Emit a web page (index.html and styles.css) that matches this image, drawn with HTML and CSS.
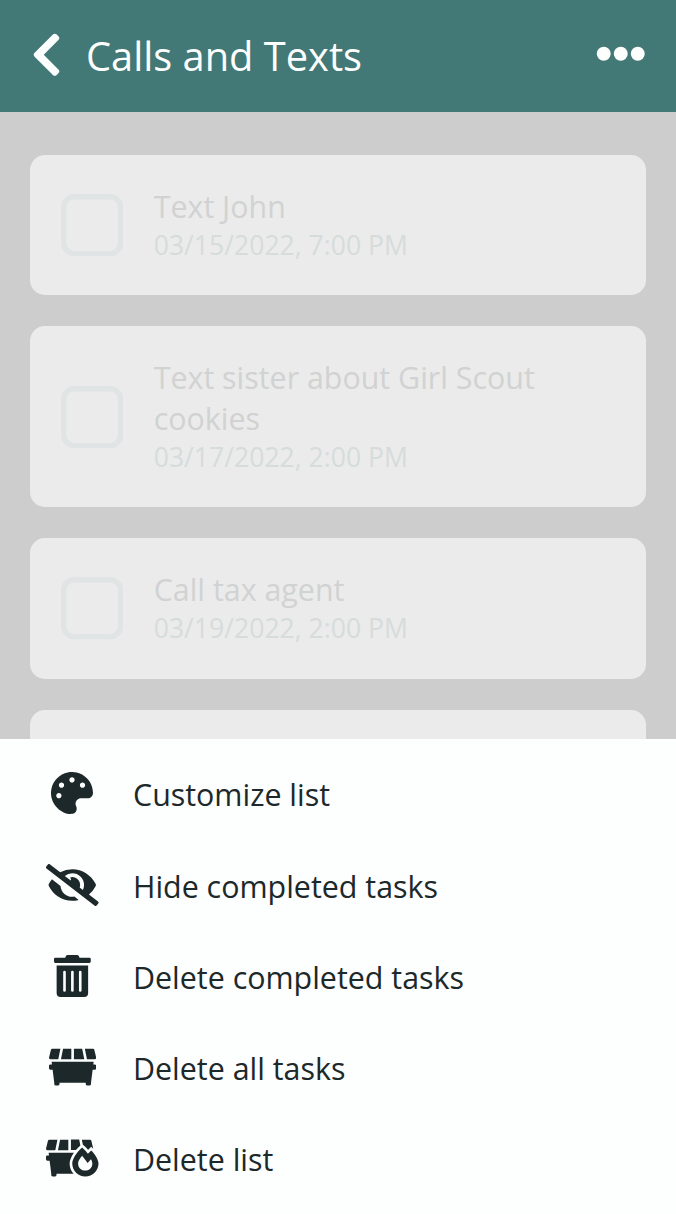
FILE: index.html
```html
<!DOCTYPE html>
<html lang="en">
<head>
<meta charset="utf-8">
<title>Calls and Texts</title>
<link rel="stylesheet" href="styles.css">
</head>
<body>
<div class="app">
  <header class="bar">
    <svg class="back" viewBox="0 0 320 512"><path d="M34.52 239.03L228.87 44.69c9.37-9.37 24.57-9.37 33.94 0l22.67 22.67c9.36 9.36 9.37 24.52.04 33.9L131.49 256l154.02 154.75c9.34 9.38 9.32 24.54-.04 33.9l-22.67 22.67c-9.37 9.37-24.57 9.37-33.94 0L34.52 272.97c-9.37-9.37-9.37-24.57 0-33.94z"/></svg>
    <h1 class="title">Calls and Texts</h1>
    <svg class="more" viewBox="0 0 512 512"><circle cx="80" cy="256" r="72"/><circle cx="256" cy="256" r="72"/><circle cx="432" cy="256" r="72"/></svg>
  </header>
  <main class="tasks">
    <article class="task"><svg class="check" viewBox="0 0 62.3 62.3"><rect x="2.7" y="2.7" width="56.9" height="56.9" rx="10.5"/></svg><div class="info"><div class="name">Text John</div><div class="date">03/15/2022, 7:00 PM</div></div></article>
    <article class="task"><svg class="check" viewBox="0 0 62.3 62.3"><rect x="2.7" y="2.7" width="56.9" height="56.9" rx="10.5"/></svg><div class="info"><div class="name">Text sister about Girl Scout cookies</div><div class="date">03/17/2022, 2:00 PM</div></div></article>
    <article class="task"><svg class="check" viewBox="0 0 62.3 62.3"><rect x="2.7" y="2.7" width="56.9" height="56.9" rx="10.5"/></svg><div class="info"><div class="name">Call tax agent</div><div class="date">03/19/2022, 2:00 PM</div></div></article>
    <article class="task"></article>
  </main>
  <nav class="menu">
    <div class="item"><span class="slot"><svg class="icon" viewBox="0 0 512 512"><path d="M204.3 5C104.9 24.4 24.8 104.3 5.2 203.4c-37 187 131.7 326.4 258.8 306.7 41.2-6.4 61.4-54.6 42.5-91.7-23.1-45.4 9.9-98.4 60.9-98.4h79.7c35.8 0 64.8-29.6 64.9-65.3C511.5 97.1 368.1-26.9 204.3 5zM96 320c-17.7 0-32-14.3-32-32s14.3-32 32-32 32 14.3 32 32-14.3 32-32 32zm32-128c-17.7 0-32-14.3-32-32s14.3-32 32-32 32 14.3 32 32-14.3 32-32 32zm128-64c-17.7 0-32-14.3-32-32s14.3-32 32-32 32 14.3 32 32-14.3 32-32 32zm128 64c-17.7 0-32-14.3-32-32s14.3-32 32-32 32 14.3 32 32-14.3 32-32 32z"/></svg></span><span class="label">Customize list</span></div>
    <div class="item"><span class="slot"><svg class="icon" viewBox="0 0 640 512"><path d="M320 400c-75.85 0-137.25-58.71-142.9-133.11L72.2 185.82c-13.79 17.3-26.48 35.59-36.72 55.59a32.35 32.35 0 0 0 0 29.19C89.71 376.41 197.07 448 320 448c26.91 0 52.87-4 77.89-10.46L346 397.39a144.13 144.13 0 0 1-26 2.61zm313.82 58.1l-110.55-85.44a331.25 331.25 0 0 0 81.25-102.07 32.35 32.35 0 0 0 0-29.19C550.29 135.59 442.93 64 320 64a308.15 308.15 0 0 0-147.32 37.7L45.46 3.37A16 16 0 0 0 23 6.18L3.37 31.45A16 16 0 0 0 6.18 53.9l588.36 454.73a16 16 0 0 0 22.46-2.81l19.64-25.27a16 16 0 0 0-2.82-22.45zm-183.72-142l-39.3-30.38A94.75 94.75 0 0 0 416 256a94.76 94.76 0 0 0-121.31-92.21A47.65 47.65 0 0 1 304 192a46.64 46.64 0 0 1-1.54 10l-73.61-56.89A142.31 142.31 0 0 1 320 112a143.92 143.92 0 0 1 144 144c0 21.63-5.29 41.79-13.9 60.11z"/></svg></span><span class="label">Hide completed tasks</span></div>
    <div class="item"><span class="slot"><svg class="icon" viewBox="0 0 448 512"><path d="M32 464a48 48 0 0 0 48 48h288a48 48 0 0 0 48-48V128H32zm272-256a16 16 0 0 1 32 0v224a16 16 0 0 1-32 0zm-96 0a16 16 0 0 1 32 0v224a16 16 0 0 1-32 0zm-96 0a16 16 0 0 1 32 0v224a16 16 0 0 1-32 0zM432 32H312l-9.4-18.7A24 24 0 0 0 281.1 0H166.8a23.72 23.72 0 0 0-21.4 13.3L136 32H16A16 16 0 0 0 0 48v32a16 16 0 0 0 16 16h416a16 16 0 0 0 16-16V48a16 16 0 0 0-16-16z"/></svg></span><span class="label">Delete completed tasks</span></div>
    <div class="item"><span class="slot"><svg class="icon" viewBox="0 0 576 512"><path d="M560 160c10.4 0 18-9.8 15.5-19.9l-24-96C549.7 37 543.3 32 536 32h-98.9l25.6 128H560zM272 32H171.5l-25.6 128H272V32zm132.5 0H304v128h126.1L404.5 32zM16 160h97.3l25.6-128H40c-7.3 0-13.7 5-15.5 12.1l-24 96C-2 150.2 5.6 160 16 160zm544 64h-20l4-32H32l4 32H16c-8.8 0-16 7.2-16 16v32c0 8.8 7.2 16 16 16h28l20 160v16c0 8.8 7.2 16 16 16h32c8.8 0 16-7.2 16-16v-16h320v16c0 8.8 7.2 16 16 16h32c8.8 0 16-7.2 16-16v-16l20-160h28c8.8 0 16-7.2 16-16v-32c0-8.8-7.2-16-16-16z"/></svg></span><span class="label">Delete all tasks</span></div>
    <div class="item"><span class="slot"><svg class="icon" viewBox="0 0 640 512"><path d="M418.7 104.1l.2-.2-14.4-72H304v128h60.8c16.2-19.3 34.2-38.2 53.9-55.8zM272 32H171.5l-25.6 128H272V32zm189.3 72.1c18.2 16.3 35.5 33.7 51.1 51.5 5.7-5.6 11.4-11.1 17.3-16.3l21.3-19 21.3 19c1.1.9 2.1 2.1 3.1 3.1-.1-.8.2-1.5 0-2.3l-24-96C549.7 37 543.3 32 536 32h-98.9l12.3 61.5 11.9 10.6zM16 160h97.3l25.6-128H40c-7.3 0-13.7 5-15.5 12.1l-24 96C-2 150.2 5.6 160 16 160zm324.6 32H32l4 32H16c-8.8 0-16 7.2-16 16v32c0 8.8 7.2 16 16 16h28l20 160v16c0 8.8 7.2 16 16 16h32c8.8 0 16-7.2 16-16v-16h208.8c-30.2-33.7-48.8-77.9-48.8-126.4 0-35.9 19.9-82.9 52.6-129.6zm210.5-28.8c-14.9 13.3-28.3 27.2-40.2 41.2-19.5-25.8-43.6-52-71-76.4-70.2 62.7-120 144.3-120 193.6 0 87.5 71.6 158.4 160 158.4s160-70.9 160-158.4c.1-36.6-37-112.2-88.8-158.4zm-18.6 229.4c-14.7 10.7-32.9 17-52.5 17-49 0-88.9-33.5-88.9-88 0-27.1 16.5-51 49.4-91.9 4.7 5.6 67.1 88.1 67.1 88.1l39.8-47c2.8 4.8 5.4 9.5 7.7 14 18.6 36.7 10.8 83.6-22.6 107.8z"/></svg></span><span class="label">Delete list</span></div>
  </nav>
</div>
</body>
</html>
```
FILE: styles.css
```css
* { box-sizing: border-box; }
body { margin: 0; font-family: "Open Sans", sans-serif; }
.app { width: 676px; height: 1214px; display: flex; flex-direction: column; overflow: hidden; background: #cdcdcd; }
.bar { flex: none; height: 112px; padding: 0 30px; display: flex; align-items: center; background: #427876; color: #fdfefe; }
.bar svg { flex: none; fill: #fdfefe; height: 49.5px; }
.bar .back { width: 31px; margin: 0 0 2.5px 0.5px; }
.bar .more { width: 49.5px; margin: 0 0.4px 4.5px auto; }
.title { margin: 0 0 0 24.5px; font-size: 39.8px; font-weight: 400; line-height: 56px; }
.tasks { flex: none; height: 627px; overflow: hidden; padding: 42.6px 30.4px 0; display: flex; flex-direction: column; gap: 31px; }
.task { flex: none; display: flex; align-items: center; gap: 30.8px; min-height: 140.8px; padding: 30.6px 30.2px 32.2px; border-radius: 15px; background: #ebebeb; }
.check { flex: none; width: 62.3px; height: 62.3px; margin-top: 1.6px; fill: none; stroke: #e0e4e4; stroke-width: 5.4px; }
.name { font-size: 30.4px; line-height: 41px; color: #d1d2d2; }
.date { font-size: 26.6px; line-height: 36px; color: #d6dcdb; }
.menu { flex: 1; padding-top: 10.3px; background: #fdfefe; color: #1c2829; }
.item { height: 91.2px; display: flex; align-items: center; }
.slot { width: 84px; margin-left: 30.3px; display: flex; justify-content: center; padding-bottom: 3px; }
.icon { height: 42px; fill: #1c2829; }
.label { margin-left: 18.7px; font-size: 30.4px; line-height: 41px; }
```
